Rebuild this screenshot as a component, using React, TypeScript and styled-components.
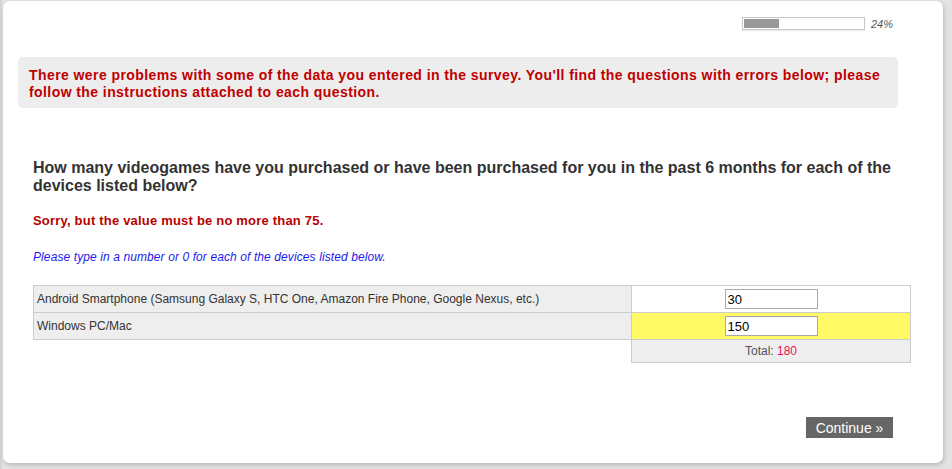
import React from "react";
import styled, { createGlobalStyle } from "styled-components";

const GlobalStyle = createGlobalStyle`
  html, body {
    margin: 0;
    padding: 0;
    background: #d6d6d6;
    font-family: "Liberation Sans", Arial, sans-serif;
  }
  body {
    background: linear-gradient(to right, #cfcfcf 0, #e2e2e2 3px, #e2e2e2 100%);
  }
`;

const Page = styled.div`
  width: 952px;
  height: 469px;
  overflow: hidden;
`;

const Card = styled.div`
  box-sizing: border-box;
  margin: 1px 0 0 3px;
  width: 940px;
  height: 462px;
  background: #fff;
  border-radius: 7px;
  box-shadow: 1px 2px 4px rgba(0, 0, 0, 0.18);
  padding-top: 16px;
  display: flex;
  flex-direction: column;
`;

const ProgressRow = styled.div`
  display: flex;
  align-items: center;
  padding-left: 739px;
  height: 13px;
  gap: 6px;
`;

const ProgressTrack = styled.div`
  box-sizing: border-box;
  width: 123px;
  height: 13px;
  border: 1px solid #c8c8c8;
  background: #fff;
  box-shadow: 0 1px 1px rgba(0, 0, 0, 0.08);
  padding: 1px;
`;

const ProgressFill = styled.div<{ pct: number }>`
  width: ${(p) => p.pct}%;
  height: 100%;
  background: #999;
`;

const ProgressLabel = styled.span`
  font-size: 11px;
  font-style: italic;
  color: #555;
`;

const ErrorBox = styled.div`
  margin: 27px 45px 0 15px;
  padding: 10px 10px 7px 11px;
  background: #ededed;
  border-radius: 5px;
  color: #c00000;
  font-size: 14px;
  font-weight: bold;
  line-height: 17px;
  letter-spacing: 0.42px;
`;

const Question = styled.div`
  margin: 51px 32px 0 30px;
`;

const QuestionText = styled.h2`
  margin: 0;
  font-size: 16px;
  font-weight: bold;
  line-height: 18px;
  color: #333;
`;

const QuestionError = styled.p`
  margin: 17px 0 0;
  font-size: 13px;
  font-weight: bold;
  line-height: 17px;
  letter-spacing: 0.2px;
  color: #b80000;
`;

const Help = styled.p`
  margin: 21px 0 0;
  font-size: 12px;
  font-style: italic;
  line-height: 15px;
  letter-spacing: 0.1px;
  color: #1c1cf0;
`;

const Grid = styled.table`
  margin-top: 20px;
  width: 878px;
  border-collapse: collapse;
  font-size: 12px;
  color: #333;
`;

const LabelCell = styled.td`
  height: 26px;
  padding: 0 0 0 3px;
  background: #eee;
  border: 1px solid #ccc;
`;

const InputCell = styled.td<{ flagged?: boolean }>`
  width: 278px;
  height: 26px;
  padding: 0;
  text-align: center;
  background: ${(p) => (p.flagged ? "#fff966" : "#fff")};
  border: 1px solid #ccc;
`;

const EmptyCell = styled.td`
  padding: 0;
  border: none;
`;

const TotalCell = styled.td`
  height: 22px;
  padding: 0;
  text-align: center;
  background: #eee;
  border: 1px solid #ccc;
  color: #555;
`;

const TotalValue = styled.span`
  color: #ee1155;
`;

const NumberInput = styled.input`
  box-sizing: border-box;
  display: block;
  margin: 0 auto;
  width: 93px;
  height: 20px;
  padding: 0 2px;
  border: 1px solid #a9a9a9;
  font-family: "Liberation Sans", Arial, sans-serif;
  font-size: 13px;
  color: #000;
  text-align: left;
`;

const Footer = styled.div`
  margin-top: auto;
  margin-bottom: 25px;
  padding-right: 50px;
  display: flex;
  justify-content: flex-end;
`;

const ContinueButton = styled.button`
  width: 87px;
  height: 21px;
  padding: 0;
  border: none;
  background: #666;
  color: #fff;
  font-family: "Liberation Sans", Arial, sans-serif;
  font-size: 14px;
  cursor: pointer;
`;

const rows = [
  {
    label:
      "Android Smartphone (Samsung Galaxy S, HTC One, Amazon Fire Phone, Google Nexus, etc.)",
    value: "30",
    flagged: false,
  },
  { label: "Windows PC/Mac", value: "150", flagged: true },
];

export default function App() {
  const total = rows.reduce((s, r) => s + Number(r.value), 0);
  return (
    <Page>
      <GlobalStyle />
      <Card>
        <ProgressRow>
          <ProgressTrack>
            <ProgressFill pct={29} />
          </ProgressTrack>
          <ProgressLabel>24%</ProgressLabel>
        </ProgressRow>

        <ErrorBox>
          There were problems with some of the data you entered in the survey.
          You'll find the questions with errors below; please follow the
          instructions attached to each question.
        </ErrorBox>

        <Question>
          <QuestionText>
            How many videogames have you purchased or have been purchased for
            you in the past 6 months for each of the devices listed below?
          </QuestionText>
          <QuestionError>Sorry, but the value must be no more than 75.</QuestionError>
          <Help>Please type in a number or 0 for each of the devices listed below.</Help>

          <Grid>
            <tbody>
              {rows.map((r) => (
                <tr key={r.label}>
                  <LabelCell>{r.label}</LabelCell>
                  <InputCell flagged={r.flagged}>
                    <NumberInput defaultValue={r.value} />
                  </InputCell>
                </tr>
              ))}
              <tr>
                <EmptyCell />
                <TotalCell>
                  Total: <TotalValue>{total}</TotalValue>
                </TotalCell>
              </tr>
            </tbody>
          </Grid>
        </Question>

        <Footer>
          <ContinueButton>Continue »</ContinueButton>
        </Footer>
      </Card>
    </Page>
  );
}
